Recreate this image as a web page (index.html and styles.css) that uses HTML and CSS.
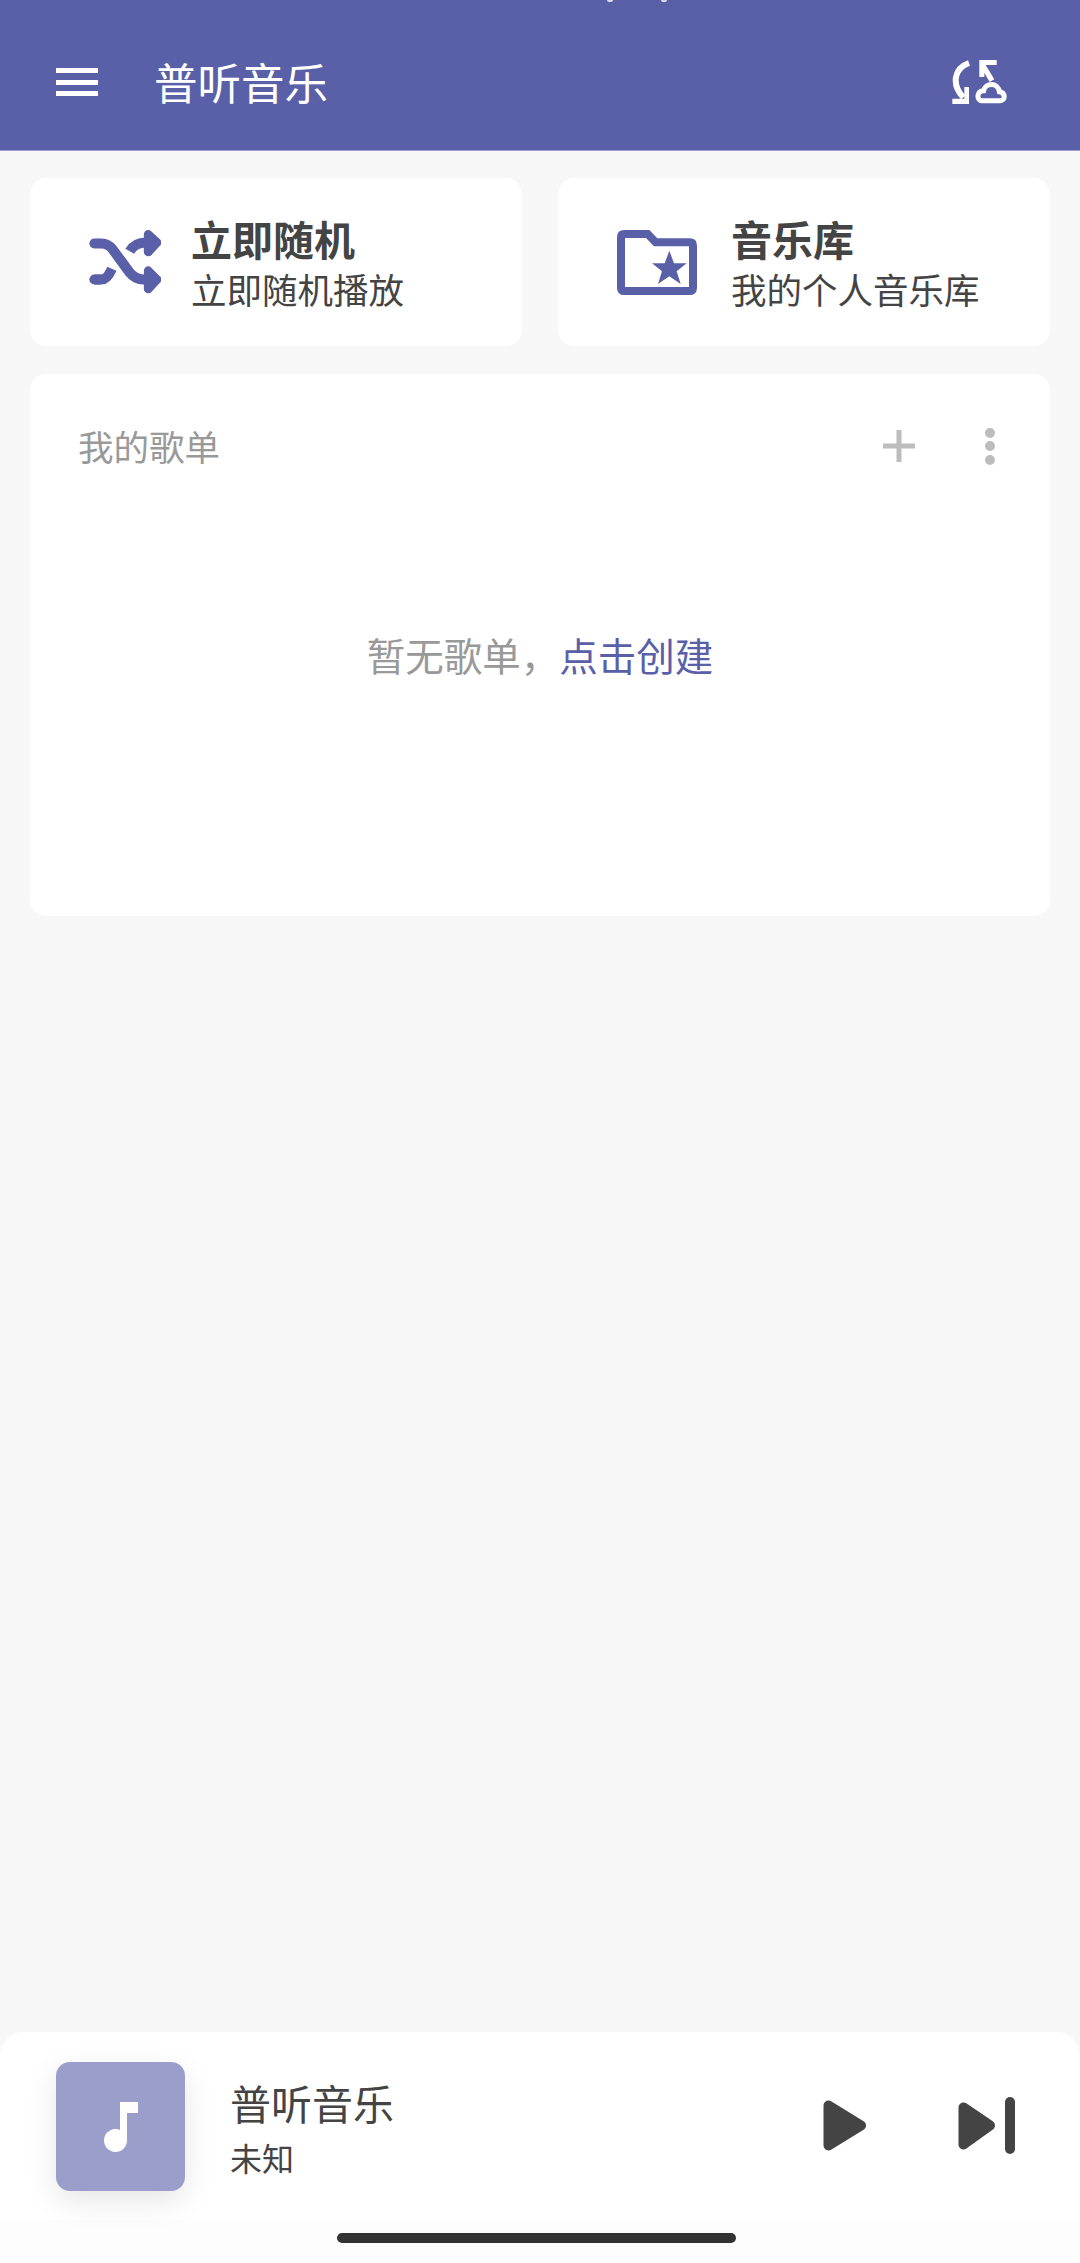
FILE: index.html
```html
<!DOCTYPE html>
<html lang="zh-CN">
  <head>
    <meta charset="UTF-8" />
    <meta name="viewport" content="width=device-width, initial-scale=1.0" />
    <link rel="stylesheet" href="styles.css">
    <title>普听音乐</title>
  </head>
  <body>
    <header class="app-bar">
      <span class="status-speck status-speck-a"></span>
      <span class="status-speck status-speck-b"></span>
      <div class="menu-icon">
        <span></span>
        <span></span>
        <span></span>
      </div>
      <h1 class="app-title">普听音乐</h1>
      <svg class="sync-icon" viewBox="97 60 166 132" width="56" height="44">
        <path d="M147 69C104 84 92 132 130 172" fill="none" stroke="#fff" stroke-width="18" />
        <path d="M97 192H147V141H133V176H97Z" fill="#fff" />
        <path d="M178 60H230V75H193V111H178Z" fill="#fff" />
        <path d="M186 72L216 122" fill="none" stroke="#fff" stroke-width="16" />
        <path d="M186 182H241C256 182 258 158 238 155C234 126 196 128 191 152C170 150 168 182 186 182Z" fill="none" stroke="#fff" stroke-width="15" />
      </svg>
    </header>

    <main class="content">
      <div class="quick-row">
        <div class="quick-card">
          <svg class="quick-icon shuffle-icon" viewBox="58 65 214 190" width="72" height="64">
            <g fill="none" stroke="#5a60a8" stroke-width="30" stroke-linecap="round">
              <path d="M74 105H95Q115 105 128 122L178 190Q195 212 220 212H232" />
              <path d="M179 128Q194 102 228 102" stroke-linecap="butt" />
              <path d="M74 212H95Q112 212 126 180" stroke-linecap="butt" />
              <path d="M74 212H90" />
            </g>
            <path d="M234 78L260 102L234 130Z" fill="#5a60a8" stroke="#5a60a8" stroke-width="26" stroke-linejoin="round" />
            <path d="M234 186L260 212L234 240Z" fill="#5a60a8" stroke="#5a60a8" stroke-width="26" stroke-linejoin="round" />
          </svg>
          <div class="quick-text">
            <div class="quick-title">立即随机</div>
            <div class="quick-sub">立即随机播放</div>
          </div>
        </div>
        <div class="quick-card">
          <svg class="quick-icon folder-icon" viewBox="50 60 240 195" width="80" height="65">
            <path d="M72 72H142L166 97H268Q278 97 278 107V233Q278 243 268 243H72Q62 243 62 233V82Q62 72 72 72Z" fill="none" stroke="#5a60a8" stroke-width="24" />
            <path d="M207 122L221 160L259 160L229 184L241 222L207 199L173 222L185 184L155 160L193 160Z" fill="#5a60a8" />
          </svg>
          <div class="quick-text">
            <div class="quick-title">音乐库</div>
            <div class="quick-sub">我的个人音乐库</div>
          </div>
        </div>
      </div>

      <section class="playlist-card">
        <div class="playlist-head">
          <h2 class="playlist-title">我的歌单</h2>
          <svg class="plus-icon" viewBox="0 0 32 32" width="32" height="32">
            <path d="M13.500 0H18.500V13.500H32V18.500H18.500V32H13.500V18.500H0V13.500H13.500Z" fill="#bdbdbd" />
          </svg>
          <div class="more-icon">
            <span></span>
            <span></span>
            <span></span>
          </div>
        </div>
        <p class="playlist-empty">暂无歌单，<span class="create-link">点击创建</span></p>
      </section>
    </main>

    <footer class="player">
      <div class="player-row">
        <div class="cover">
          <svg viewBox="0 0 34 50" width="34" height="50">
            <path d="M16 0H34V11H23V38.500A11.500 11.500 0 1 1 16 27.900Z" fill="#fff" />
          </svg>
        </div>
        <div class="track">
          <div class="track-title">普听音乐</div>
          <div class="track-artist">未知</div>
        </div>
        <svg class="play-icon" viewBox="0 0 43 51" width="43" height="51">
          <path d="M5.500 5.500L38 25.500L5.500 45.500Z" fill="#444" stroke="#444" stroke-width="10" stroke-linejoin="round" />
        </svg>
        <svg class="next-icon" viewBox="0 0 57 57" width="57" height="57">
          <path d="M5.500 10.500L32 28.500L5.500 47.500Z" fill="#444" stroke="#444" stroke-width="10" stroke-linejoin="round" />
          <rect x="47" y="0" width="10" height="57" rx="5" fill="#444" />
        </svg>
      </div>
      <div class="nav-strip">
        <div class="home-bar"></div>
      </div>
    </footer>
  </body>
</html>
```

FILE: styles.css
```css
* {
  margin: 0;
  padding: 0;
  box-sizing: border-box;
}
body {
  height: 2263px;
  display: flex;
  flex-flow: column;
  overflow: hidden;
  background-color: #f7f7f7;
  font-family: "Noto Sans CJK SC", "Noto Sans", sans-serif;
  color: #444;
}
.app-bar {
  position: relative;
  height: 151px;
  display: flex;
  align-items: center;
  padding: 14px 72px 0 56px;
  background-color: #5a60a8;
  border-bottom: 1px solid #9a9dcc;
}
.status-speck {
  position: absolute;
  top: 0;
  width: 6px;
  height: 2px;
  border-radius: 0 0 4px 4px;
  background-color: #dcdcee;
}
.status-speck-a {
  left: 607px;
}
.status-speck-b {
  left: 661px;
}
.menu-icon {
  width: 42px;
  height: 28px;
  display: flex;
  flex-flow: column;
  justify-content: space-between;
}
.menu-icon span {
  height: 5px;
  background-color: #fff;
}
.app-title {
  margin-left: 56px;
  font-size: 43.500px;
  font-weight: 400;
  line-height: 60px;
  color: #fff;
}
.sync-icon {
  margin-left: auto;
}
.content {
  flex: 1;
  padding: 27px 30px 0;
}
.quick-row {
  display: flex;
  gap: 36px;
}
.quick-card {
  flex: 1;
  height: 168px;
  display: flex;
  align-items: center;
  padding-left: 59px;
  background-color: #fff;
  border-radius: 16px;
}
.shuffle-icon {
  margin-right: 30px;
}
.folder-icon {
  margin-right: 34px;
}
.quick-text {
  padding-top: 4px;
}
.quick-title {
  font-size: 41px;
  font-weight: 700;
  line-height: 49px;
}
.quick-sub {
  font-size: 35.500px;
  line-height: 52px;
}
.playlist-card {
  height: 542px;
  margin-top: 28px;
  background-color: #fff;
  border-radius: 16px;
}
.playlist-head {
  display: flex;
  align-items: center;
  padding: 47px 55px 0 48px;
}
.playlist-title {
  flex: 1;
  font-size: 35.500px;
  font-weight: 400;
  line-height: 50px;
  color: #999;
}
.plus-icon {
  margin-right: 70px;
}
.more-icon {
  width: 10px;
  height: 37px;
  display: flex;
  flex-flow: column;
  justify-content: space-between;
}
.more-icon span {
  width: 10px;
  height: 10px;
  border-radius: 50%;
  background-color: #bdbdbd;
}
.playlist-empty {
  margin-top: 153px;
  text-align: center;
  font-size: 38.500px;
  line-height: 60px;
  color: #999;
}
.create-link {
  color: #5a60a8;
}
.player {
  height: 231px;
  background-color: #fff;
  border-radius: 24px 24px 0 0;
  overflow: hidden;
}
.player-row {
  height: 188px;
  display: flex;
  align-items: center;
  padding: 0 65px 0 56px;
}
.cover {
  width: 129px;
  height: 129px;
  margin-top: 30px;
  align-self: flex-start;
  display: flex;
  align-items: center;
  justify-content: center;
  background-color: #9b9ecb;
  border-radius: 14px;
  box-shadow: 0 10px 30px rgba(0, 0, 0, 0.1);
}
.track {
  flex: 1;
  margin-left: 45px;
  margin-top: 3px;
}
.track-title {
  font-size: 41px;
  line-height: 56px;
}
.track-artist {
  padding-top: 2px;
  font-size: 32px;
  line-height: 50px;
}
.play-icon {
  margin-right: 92px;
  margin-bottom: 2px;
}
.next-icon {
  margin-bottom: 1px;
}
.nav-strip {
  height: 43px;
  padding: 13px 0 0 337px;
  background-color: #fdfdfd;
}
.home-bar {
  width: 399px;
  height: 10px;
  border-radius: 5px;
  background-color: #333;
}
```
